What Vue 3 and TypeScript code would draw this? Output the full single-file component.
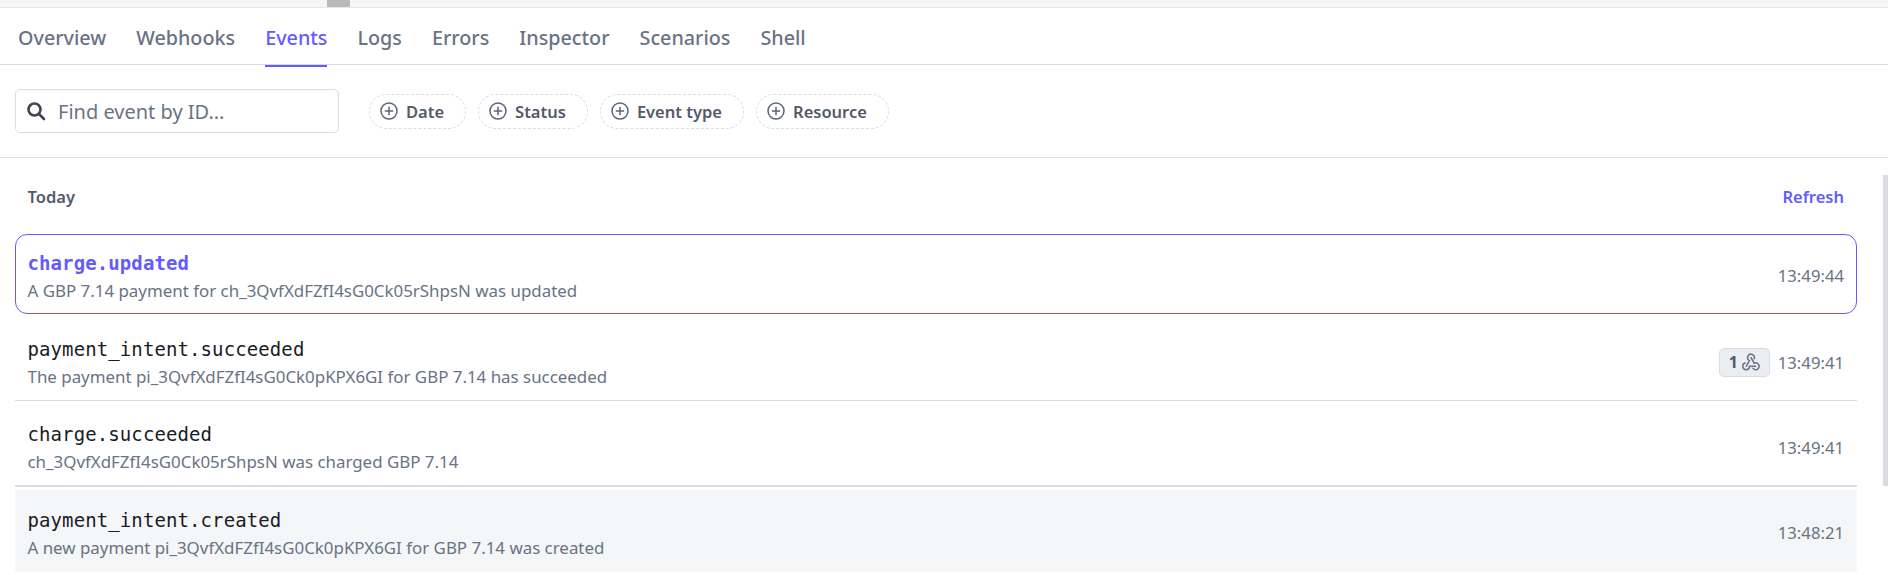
<script setup lang="ts">
interface EventRow {
  name: string
  desc: string
  time: string
  hooks?: number
  state?: string
}

const tabs = ['Overview', 'Webhooks', 'Events', 'Logs', 'Errors', 'Inspector', 'Scenarios', 'Shell']
const filters = ['Date', 'Status', 'Event type', 'Resource']

const events: EventRow[] = [
  { name: 'charge.updated', desc: 'A GBP 7.14 payment for ch_3QvfXdFZfI4sG0Ck05rShpsN was updated', time: '13:49:44', state: 'selected' },
  { name: 'payment_intent.succeeded', desc: 'The payment pi_3QvfXdFZfI4sG0Ck0pKPX6GI for GBP 7.14 has succeeded', time: '13:49:41', hooks: 1 },
  { name: 'charge.succeeded', desc: 'ch_3QvfXdFZfI4sG0Ck05rShpsN was charged GBP 7.14', time: '13:49:41', state: 'thick' },
  { name: 'payment_intent.created', desc: 'A new payment pi_3QvfXdFZfI4sG0Ck0pKPX6GI for GBP 7.14 was created', time: '13:48:21', state: 'hover' },
]
</script>

<template>
  <div class="page">
    <div class="topstrip"><div class="thumb"></div></div>

    <nav class="tabs">
      <a v-for="t in tabs" :key="t" class="tab" :class="{ active: t === 'Events' }">{{ t }}</a>
    </nav>

    <div class="filters">
      <label class="search">
        <svg width="20" height="20" viewBox="0 0 20 20" fill="none" stroke="#414552" stroke-width="2.6">
          <circle cx="8.5" cy="8.5" r="6" />
          <path d="M13 13l5 5" stroke-linecap="round" />
        </svg>
        <input placeholder="Find event by ID..." />
      </label>
      <div class="chips">
        <button v-for="f in filters" :key="f" class="chip">
          <svg width="18" height="18" viewBox="0 0 18 18" fill="none" stroke="#5c6478" stroke-width="1.5">
            <circle cx="9" cy="9" r="8" />
            <path d="M9 4.8v8.4M4.8 9h8.4" />
          </svg>
          {{ f }}
        </button>
      </div>
    </div>

    <section class="list">
      <header class="list-head">
        <span class="today">Today</span>
        <a class="refresh">Refresh</a>
      </header>

      <div v-for="e in events" :key="e.name + e.time" class="row" :class="e.state">
        <div class="row-text">
          <div class="name">{{ e.name }}</div>
          <div class="desc">{{ e.desc }}</div>
        </div>
        <div class="row-right">
          <span v-if="e.hooks" class="badge">
            {{ e.hooks }}
            <svg width="18" height="18" viewBox="0 0 18 18" fill="none" stroke="#687385" stroke-width="1.5" stroke-linecap="round">
              <path d="M4.3 13.3 7.4 7.6A3.4 3.4 0 1 1 12.2 5.8" />
              <path d="M9 4.6 12.2 10.2A3.4 3.4 0 1 1 11 15.4" />
              <path d="M13.7 13.3H7.6A3.4 3.4 0 1 1 3.2 10" />
            </svg>
          </span>
          <span class="time">{{ e.time }}</span>
        </div>
      </div>
    </section>

    <div class="scrollbar"></div>
  </div>
</template>

<style>
html, body {
  margin: 0;
  background: #fff;
}
</style>

<style scoped>
.page {
  position: relative;
  height: 575px;
  overflow: hidden;
  font-family: "Noto Sans", "Open Sans", sans-serif;
  color: #414552;
}

.topstrip {
  height: 8px;
  background: #f6f6f6;
  border-bottom: 1px solid #e6e6e6;
  box-sizing: border-box;
}
.thumb {
  width: 23px;
  height: 7px;
  margin-left: 327px;
  background: #b9b9b9;
}

.tabs {
  display: flex;
  gap: 30px;
  height: 56px;
  padding: 0 18px;
  border-bottom: 1px solid #d8dce6;
}
.tab {
  height: 54px;
  padding-top: 3px;
  border-bottom: 2px solid transparent;
  font-size: 19.75px;
  font-weight: 500;
  line-height: 53px;
  color: #687385;
}
.tab.active {
  color: #635bff;
  border-bottom-color: #635bff;
}

.filters {
  display: flex;
  align-items: center;
  height: 92px;
  padding-left: 15px;
  border-bottom: 1px solid #e0e0e2;
}
.search {
  display: flex;
  align-items: center;
  gap: 12px;
  width: 324px;
  height: 44px;
  box-sizing: border-box;
  padding: 0 10px;
  border: 1px solid #d8dce6;
  border-radius: 5px;
  margin-right: 30px;
}
.search input {
  flex: 1;
  min-width: 0;
  border: 0;
  outline: 0;
  padding: 0;
  font: 400 20px "Noto Sans", sans-serif;
  background: transparent;
}
.search input::placeholder {
  color: #6a7383;
  opacity: 1;
}
.chips {
  display: flex;
  gap: 12px;
}
.chip {
  display: flex;
  align-items: center;
  gap: 8px;
  height: 35px;
  padding: 0 21px 0 10px;
  border: 1px dashed #d8dce6;
  border-radius: 18px;
  background: #fff;
  font: 600 16.5px "Noto Sans", sans-serif;
  color: #545969;
}

.list {
  width: 1842px;
  margin-left: 15px;
}
.list-head {
  display: flex;
  justify-content: space-between;
  align-items: center;
  height: 76px;
  padding: 0 13px 0 12.5px;
  font-size: 16.5px;
  font-weight: 600;
}
.today {
  color: #545969;
}
.refresh {
  color: #635bff;
}

.row {
  display: flex;
  justify-content: space-between;
  align-items: center;
  height: 83px;
  padding: 6px 13px 0 12.5px;
  box-sizing: border-box;
  border-bottom: 1px solid #d8dce6;
}
.row.selected {
  height: 80px;
  border: 1px solid #635bff;
  border-radius: 12px;
  padding: 3px 12px 0 11.5px;
  margin-bottom: 4px;
}
.row.selected .name {
  color: #635bff;
  font-weight: 700;
}
.row.thick {
  height: 86px;
  padding-top: 8px;
  border-bottom: 2px solid #d8dce6;
  margin-bottom: 3px;
}
.row.hover {
  height: 82px;
  padding-top: 3px;
  background: #f5f6f8;
  border-bottom: 0;
}

.name {
  font-family: "DejaVu Sans Mono", monospace;
  font-size: 19px;
  letter-spacing: 0.1px;
  line-height: 30px;
  color: #1a1b25;
}
.desc {
  font-size: 16.9px;
  line-height: 26px;
  color: #687385;
}

.row-right {
  display: flex;
  align-items: center;
  gap: 8px;
}
.badge {
  display: flex;
  align-items: center;
  gap: 4px;
  height: 29px;
  padding: 0 9px;
  box-sizing: border-box;
  border: 1px solid #d8dce6;
  border-radius: 5px;
  background: #ebeef1;
  font-size: 16px;
  font-weight: 700;
  color: #545969;
}
.time {
  font-size: 16.7px;
  color: #687385;
}

.scrollbar {
  position: absolute;
  top: 175px;
  right: 0;
  width: 5px;
  height: 311px;
  background: #d8dbe3;
}
</style>
